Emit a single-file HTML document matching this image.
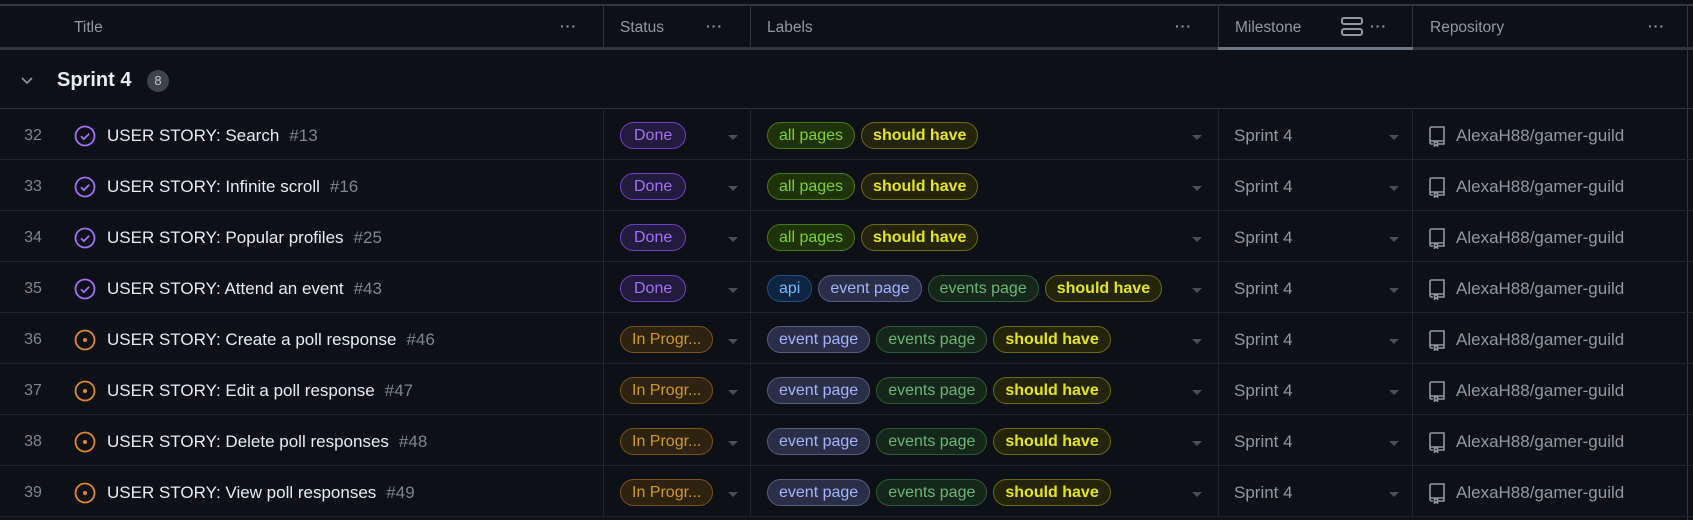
<!DOCTYPE html>
<html><head><meta charset="utf-8"><style>
*{box-sizing:border-box;margin:0;padding:0}
body{width:1693px;height:520px;background:#0d1117;font-family:"Liberation Sans",sans-serif;color:#e6edf3;position:relative;overflow:hidden}
.a{position:absolute;white-space:nowrap}
.hl{position:absolute;left:0;width:1693px;height:1px;background:#21262d}
.vl{position:absolute;width:1px;background:#30363d}
.h{color:#9198a1;font-size:15.5px;top:19px}
.dots{color:#9198a1;font-size:14px;letter-spacing:1px;top:18px;font-weight:bold}
.num{color:#7d8590;font-size:16px;width:32px;text-align:center;left:17px}
.t{font-size:17px;left:107px;color:#e6edf3}
.t span{color:#7d8590;margin-left:10px}
.pill{position:absolute;height:27px;border-radius:14px;border:1px solid;font-size:16px;line-height:25px;padding:0 11px;white-space:nowrap}
.done{background:#231b3d;border-color:#6e40c9;color:#a371f7;padding:0 13px}
.prog{background:#2e2210;border-color:#7a5418;color:#d29922}
.car{width:0;height:0;border-left:5px solid transparent;border-right:5px solid transparent;border-top:5px solid #484f58}
.ms{font-size:17px;color:#9198a1;left:1234px}
.repo{font-size:17px;color:#9198a1;left:1456px}
.api{background:#0d2540;border-color:#1f4f85;color:#79b8ff}
.ep{background:#2a2f48;border-color:#555c80;color:#a5b4fc}
.eps{background:#14271a;border-color:#2f5a37;color:#6bb575}
.sh{background:#24240a;border-color:#6b6b10;color:#e5e51a;font-weight:bold}
.ap{background:#1f3308;border-color:#4a7a12;color:#7ed321}
</style></head><body>
<div class="hl" style="top:4px;height:2px;background:#30363d"></div>
<div class="hl" style="top:47px;height:3px;background:#30363d"></div>
<div class="a" style="left:1218px;top:47px;width:195px;height:3px;background:#6e7681"></div>
<div class="vl" style="left:603px;top:6px;height:41px"></div>
<div class="vl" style="left:750px;top:6px;height:41px"></div>
<div class="vl" style="left:1218px;top:6px;height:41px"></div>
<div class="vl" style="left:1412px;top:6px;height:41px"></div>
<div class="vl" style="left:1687px;top:6px;height:514px"></div>
<div class="a h" style="left:74px">Title</div><div class="a dots" style="left:560px">···</div>
<div class="a h" style="left:620px">Status</div><div class="a dots" style="left:706px">···</div>
<div class="a h" style="left:767px">Labels</div><div class="a dots" style="left:1175px">···</div>
<div class="a h" style="left:1235px">Milestone</div>
<div class="a" style="left:1341px;top:17px;width:22px;height:8px;border:2px solid #9198a1;border-radius:3px"></div>
<div class="a" style="left:1341px;top:28px;width:22px;height:8px;border:2px solid #9198a1;border-radius:3px"></div>
<div class="a dots" style="left:1370px">···</div>
<div class="a h" style="left:1430px">Repository</div><div class="a dots" style="left:1648px">···</div>
<svg class="a" style="left:20px;top:76px" width="14" height="10"><path d="M2 2l5 5 5-5" stroke="#9198a1" stroke-width="1.6" fill="none"/></svg>
<div class="a" style="left:57px;top:69px;font-size:20px;font-weight:bold;color:#e6edf3">Sprint 4</div>
<div class="a" style="left:147px;top:70px;width:22px;height:22px;border-radius:11px;background:#3d444d;color:#c0c6cd;font-size:13px;text-align:center;line-height:22px">8</div>
<div class="hl" style="top:108px;background:#30363d"></div>
<div id="rows"></div>
<script>
const rows=[
["32",1,"USER STORY: Search","#13",[["ap","all pages"],["sh","should have"]]],
["33",1,"USER STORY: Infinite scroll","#16",[["ap","all pages"],["sh","should have"]]],
["34",1,"USER STORY: Popular profiles","#25",[["ap","all pages"],["sh","should have"]]],
["35",1,"USER STORY: Attend an event","#43",[["api","api"],["ep","event page"],["eps","events page"],["sh","should have"]]],
["36",0,"USER STORY: Create a poll response","#46",[["ep","event page"],["eps","events page"],["sh","should have"]]],
["37",0,"USER STORY: Edit a poll response","#47",[["ep","event page"],["eps","events page"],["sh","should have"]]],
["38",0,"USER STORY: Delete poll responses","#48",[["ep","event page"],["eps","events page"],["sh","should have"]]],
["39",0,"USER STORY: View poll responses","#49",[["ep","event page"],["eps","events page"],["sh","should have"]]]];
let h="";
rows.forEach((r,i)=>{const y=108+i*51,c=y+28;
h+=`<div class="hl" style="top:${y+51}px"></div>`;
[603,750,1218,1412].forEach(x=>h+=`<div class="vl" style="left:${x}px;top:${y}px;height:51px;background:#21262d"></div>`);
h+=`<div class="a num" style="top:${c-9}px">${r[0]}</div>`;
h+=r[1]?`<svg class="a" style="left:74px;top:${c-11}px" width="22" height="22"><circle cx="11" cy="11" r="9.5" fill="none" stroke="#a371f7" stroke-width="1.8"/><path d="M7 11.3l2.8 2.8 5.4-5.4" stroke="#a371f7" stroke-width="1.8" fill="none"/></svg>`
:`<svg class="a" style="left:74px;top:${c-11}px" width="22" height="22"><circle cx="11" cy="11" r="9.5" fill="none" stroke="#e3892c" stroke-width="1.8"/><circle cx="11" cy="11" r="2" fill="#e3892c"/></svg>`;
h+=`<div class="a t" style="top:${c-10}px">${r[2]}<span>${r[3]}</span></div>`;
h+=`<div class="pill ${r[1]?'done':'prog'}" style="left:620px;top:${c-14}px">${r[1]?'Done':'In Progr...'}</div>`;
h+=`<div class="a car" style="left:728px;top:${c-1}px"></div>`;
h+=`<div class="a" style="left:767px;top:${c-14}px;display:flex;gap:6px">${r[4].map(l=>`<div class="pill ${l[0]}" style="position:static">${l[1]}</div>`).join("")}</div>`;
h+=`<div class="a car" style="left:1192px;top:${c-1}px"></div>`;
h+=`<div class="a ms" style="top:${c-10}px">Sprint 4</div><div class="a car" style="left:1389px;top:${c-1}px"></div>`;
h+=`<svg class="a" style="left:1428px;top:${c-11}px" width="18" height="22"><path d="M2 18V3.5A1.5 1.5 0 0 1 3.5 2H16v14H3.5A1.5 1.5 0 0 0 2 17.5 1.5 1.5 0 0 0 3.5 19H5M16 16v3h-6M6.5 17v4l1.5-1 1.5 1v-4z" stroke="#9198a1" stroke-width="1.6" fill="none"/></svg>`;
h+=`<div class="a repo" style="top:${c-10}px">AlexaH88/gamer-guild</div>`;
});
document.getElementById("rows").innerHTML=h;
</script>
</body></html>
